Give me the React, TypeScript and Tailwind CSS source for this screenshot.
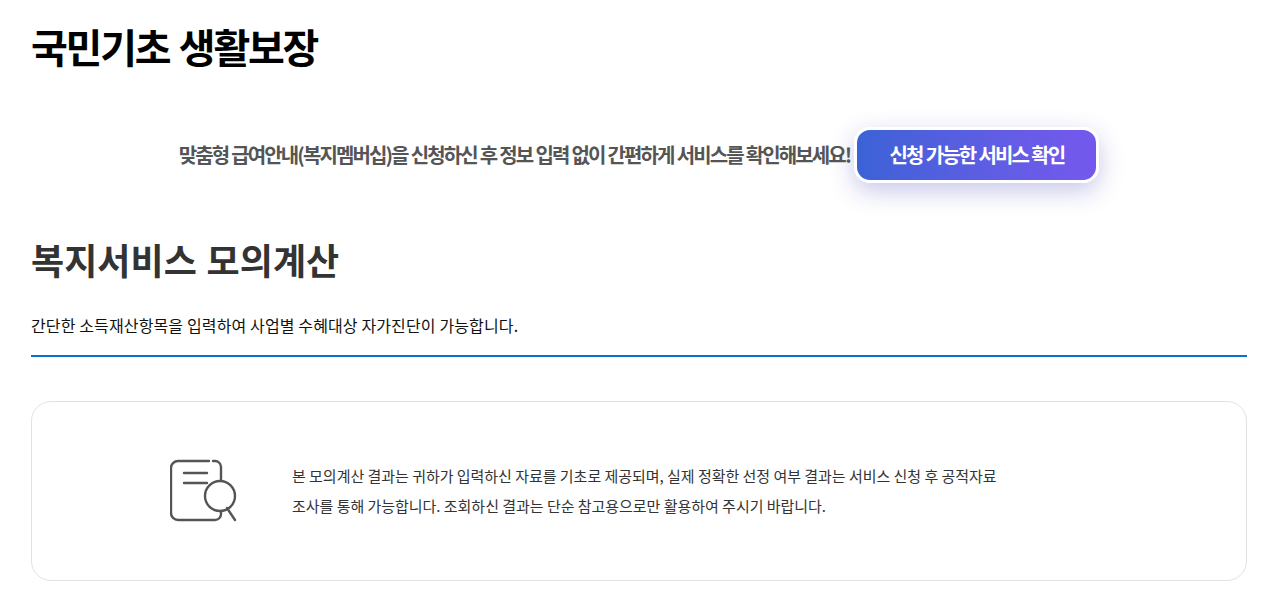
import React from 'react';

const font = { fontFamily: '"Noto Sans CJK KR", "Noto Sans", sans-serif' };

const App: React.FC = () => {
  return (
    <div style={font} className="w-[1275px] h-[596px] overflow-hidden bg-white pl-[31px] pr-[28px]">
      {/* 제목 */}
      <h1 className="pt-[17px] text-[40px] leading-[58px] font-bold tracking-[-2.2px] [word-spacing:2.5px] text-black">
        국민기초 생활보장
      </h1>

      {/* 멤버십 안내 */}
      <div className="mt-[52px] flex items-center justify-center">
        <p className="text-[20px] font-bold tracking-[-1.9px] [word-spacing:0.45px] text-[#555]">
          맞춤형 급여안내(복지멤버십)을 신청하신 후 정보 입력 없이 간편하게 서비스를 확인해보세요!
        </p>
        <button className="ml-[4px] h-[56px] w-[245px] rounded-[16px] border-[3px] border-white bg-gradient-to-r from-[#3b62d6] to-[#7558ee] text-[20px] font-bold tracking-[-2px] [word-spacing:1px] text-white shadow-[0_8px_24px_rgba(80,80,190,0.32)]">
          신청 가능한 서비스 확인
        </button>
      </div>

      {/* 모의계산 */}
      <h2 className="mt-[50px] text-[36px] leading-[52px] font-bold tracking-[0.05px] [word-spacing:1.5px] text-[#333]">
        복지서비스 모의계산
      </h2>
      <p className="mt-[28px] pb-[18px] text-[16px] leading-[24px] tracking-[0.13px] text-[#111] border-b-2 border-[#0b72c9]">
        간단한 소득재산항목을 입력하여 사업별 수혜대상 자가진단이 가능합니다.
      </p>

      {/* 안내 박스 */}
      <div className="mt-[44px] flex h-[180px] items-center rounded-[20px] border border-[#e2e2e2] pl-[138px]">
        <svg width="68" height="64" viewBox="0 0 68 64" fill="none" stroke="#555" strokeWidth="2.4" strokeLinecap="round" className="shrink-0">
          <path d="M39 2H8a7 7 0 0 0-7 7v45a7 7 0 0 0 7 7h37a6 6 0 0 0 6-6v-3" />
          <path d="M43 2h2a6 6 0 0 1 6 6v13" />
          <path d="M14 14h23 M14 24h23" />
          <circle cx="50" cy="37" r="15" />
          <path d="M57 49l8 12" />
        </svg>
        <p className="ml-[54px] text-[15px] leading-[30px] tracking-[-0.03px] text-[#333]">
          본 모의계산 결과는 귀하가 입력하신 자료를 기초로 제공되며, 실제 정확한 선정 여부 결과는 서비스 신청 후 공적자료
          <br />
          조사를 통해 가능합니다. 조회하신 결과는 단순 참고용으로만 활용하여 주시기 바랍니다.
        </p>
      </div>
    </div>
  );
};

export default App;
